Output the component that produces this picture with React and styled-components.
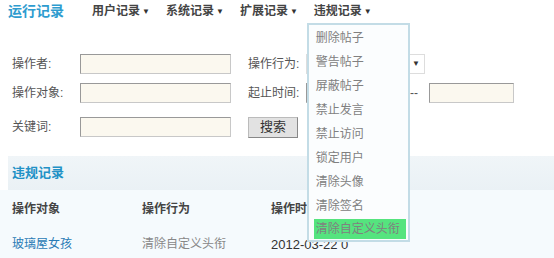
import React from 'react'
import styled, { createGlobalStyle } from 'styled-components'

const Global = createGlobalStyle`
  body {
    margin: 0;
    background: #fff;
    font-family: "Liberation Sans", "Noto Sans CJK SC", sans-serif;
    font-size: 12px;
    line-height: 1.2;
    color: #555;
  }
`;

const menuItems = ['删除帖子', '警告帖子', '屏蔽帖子', '禁止发言', '禁止访问', '锁定用户', '清除头像', '清除签名', '清除自定义头衔'];
const navItems = ['用户记录', '系统记录', '扩展记录'];

export default function App() {
    return (
        <Page>
            <Global />
            <Nav>
                <Title>运行记录</Title>
                {navItems.map((item) => (
                    <NavItem key={item}>{item}<Arrow>▼</Arrow></NavItem>
                ))}
                <NavItem>
                    违规记录<Arrow>▼</Arrow>
                    <Menu>
                        {menuItems.map((item, i) => (
                            <MenuItem key={item} $active={i === menuItems.length - 1}>{item}</MenuItem>
                        ))}
                    </Menu>
                </NavItem>
            </Nav>

            <Form>
                <Row>
                    <Field $first>
                        <Label>操作者:</Label>
                        <Input />
                    </Field>
                    <Field>
                        <Label $wide>操作行为:</Label>
                        <Select>
                            <SelectText>清除自定义头衔</SelectText>
                            <Arrow>▼</Arrow>
                        </Select>
                    </Field>
                </Row>
                <Row>
                    <Field $first>
                        <Label>操作对象:</Label>
                        <Input />
                    </Field>
                    <Field>
                        <Label $wide>起止时间:</Label>
                        <Input $w={96} />
                        <Dash>--</Dash>
                        <Input $w={85} />
                    </Field>
                </Row>
                <Row $gap={14}>
                    <Field $first>
                        <Label>关键词:</Label>
                        <Input />
                    </Field>
                    <Field>
                        <Button>搜索</Button>
                    </Field>
                </Row>
            </Form>

            <SectionBar>违规记录</SectionBar>
            <Table>
                <HeadCell>操作对象</HeadCell>
                <HeadCell>操作行为</HeadCell>
                <HeadCell>操作时间</HeadCell>
                <Cell><Link>玻璃屋女孩</Link></Cell>
                <Cell>清除自定义头衔</Cell>
                <Cell $dark>2012-03-22 0</Cell>
            </Table>
        </Page>
    );
}

const Page = styled.div`
width: 554px;
height: 258px;
overflow: hidden;
position: relative;
`;

const Nav = styled.div`
display: flex;
align-items: center;
height: 23px;
padding-left: 8px;
`;

const Title = styled.div`
font-size: 14px;
font-weight: bold;
color: #2e9ccf;
margin-right: 28px;
`;

const NavItem = styled.div`
position: relative;
display: flex;
align-items: center;
height: 23px;
font-weight: bold;
color: #444;
margin-right: 16px;
`;

const Arrow = styled.span`
font-size: 8px;
margin-left: 2px;
color: #333;
font-weight: normal;
`;

const Menu = styled.div`
position: absolute;
left: -7px;
top: 23px;
width: 99px;
height: 214px;
padding-top: 1px;
border: 2px solid #c3dce6;
background: #fbfdfe;
z-index: 5;
`;

const MenuItem = styled.div`
height: ${(p) => (p.$active ? '20px' : '24px')};
line-height: ${(p) => (p.$active ? '20px' : '24px')};
margin: ${(p) => (p.$active ? '1px 2px 0 5px' : '0')};
padding-left: ${(p) => (p.$active ? '2px' : '7px')};
font-weight: normal;
color: #808080;
white-space: nowrap;
background: ${(p) => (p.$active ? '#55e47e' : 'transparent')};
`;

const Form = styled.div`
display: flex;
flex-direction: column;
padding: 31px 0 0 12px;
`;

const Row = styled.div`
display: flex;
height: 20px;
margin-top: ${(p) => (p.$gap ? `${p.$gap}px` : '9px')};
&:first-child { margin-top: 0; }
`;

const Field = styled.div`
display: flex;
align-items: center;
flex-shrink: 0;
width: ${(p) => (p.$first ? '236px' : 'auto')};
& > * { flex-shrink: 0; }
`;

const Label = styled.div`
width: ${(p) => (p.$wide ? '58px' : '68px')};
color: #555;
white-space: nowrap;
`;

const Input = styled.div`
box-sizing: border-box;
width: ${(p) => (p.$w ? `${p.$w}px` : '151px')};
height: 20px;
background: #fbf8ef;
border: 1px solid #c8c8c8;
border-top-color: #999;
border-left-color: #999;
`;

const Select = styled.div`
box-sizing: border-box;
display: flex;
align-items: center;
justify-content: flex-end;
width: 119px;
height: 20px;
padding: 0 4px 0 0;
border: 1px solid #ddd;
color: #ccc;
white-space: nowrap;
overflow: hidden;
`;

const SelectText = styled.span`
margin-right: 6px;
`;

const Dash = styled.span`
width: 24px;
margin-right: 3px;
text-align: center;
color: #555;
`;

const Button = styled.div`
box-sizing: border-box;
width: 50px;
height: 21px;
display: flex;
align-items: center;
justify-content: center;
background: #e2e2e2;
border: 1px solid #bbb;
border-bottom-color: #888;
border-right-color: #888;
color: #333;
font-size: 13px;
`;

const SectionBar = styled.div`
margin: 19px 0 0 8px;
height: 34px;
display: flex;
align-items: center;
padding-left: 4px;
background: linear-gradient(#f0f5f8, #eaf1f5);
color: #2291c6;
font-weight: bold;
font-size: 13px;
`;

const Table = styled.div`
display: grid;
grid-template-columns: 130px 129px 1fr;
grid-auto-rows: 34px;
padding: 2px 0 0 12px;
background: #f5fafd;
height: 70px;
align-items: center;
`;

const HeadCell = styled.div`
font-weight: bold;
color: #444;
`;

const Cell = styled.div`
color: ${(p) => (p.$dark ? '#333' : '#888')};
font-size: ${(p) => (p.$dark ? '13px' : '12px')};
margin-top: 3px;
`;

const Link = styled.span`
color: #2a7bb5;
`;
